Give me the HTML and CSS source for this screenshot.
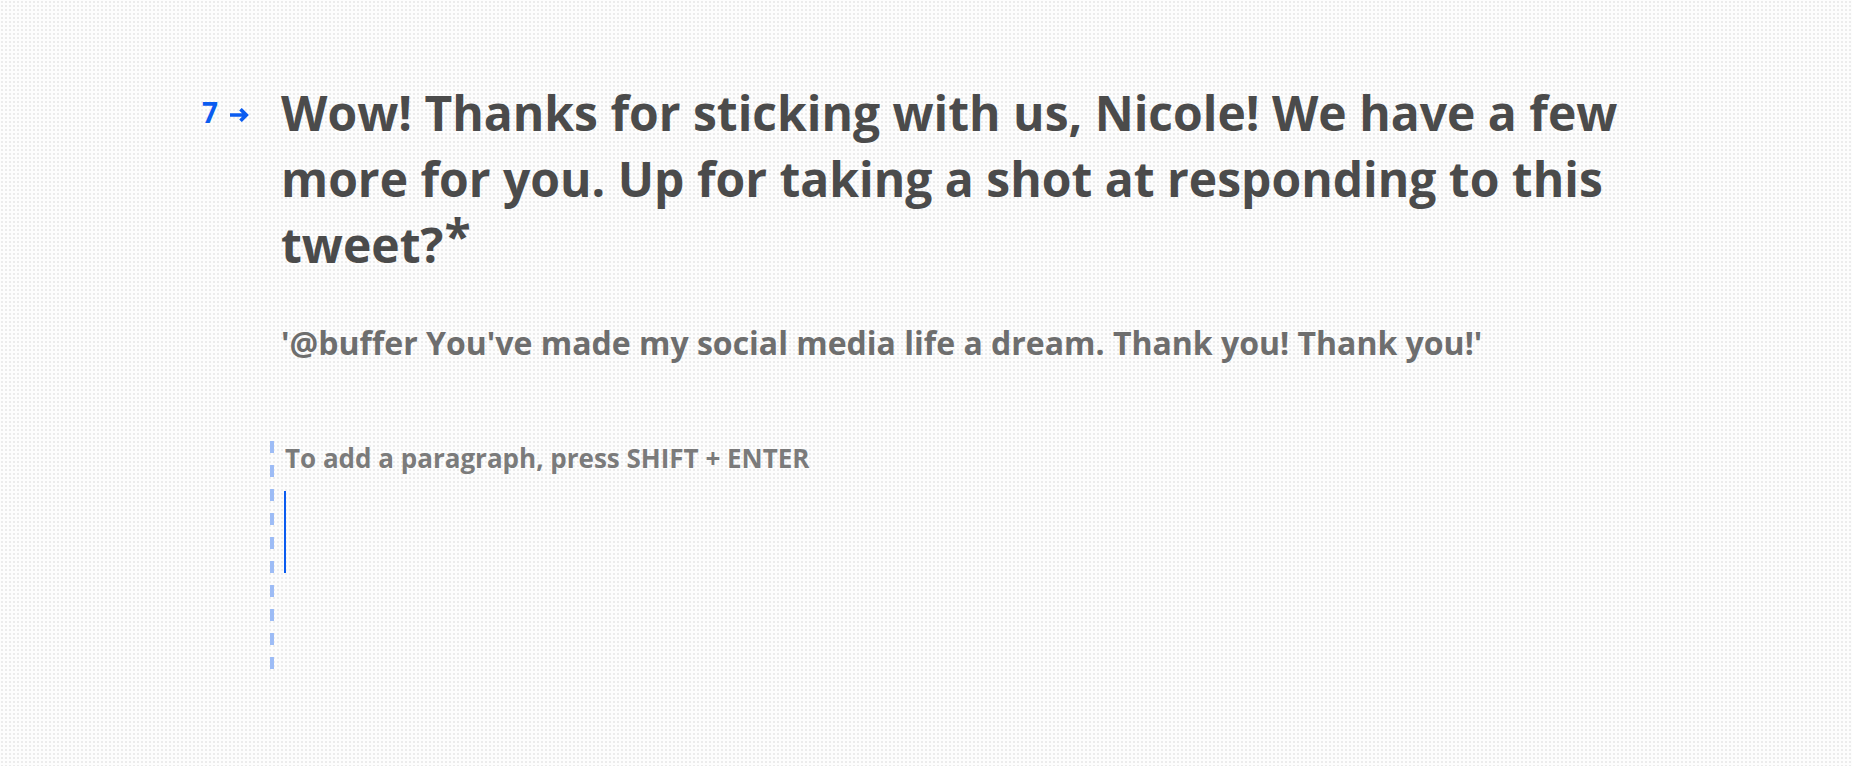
FILE: index.html
```html
<!DOCTYPE html>
<html lang="en">
<head>
  <meta charset="UTF-8" />
  <meta name="viewport" content="width=device-width, initial-scale=1.0"/>
  <title>Question 7</title>
  <link rel="stylesheet" href="styles.css">
</head>
<body>

  <main class="form-step">
    <div class="question">
      <div class="counter">
        <span class="counter-num">7</span>
        <svg class="counter-arrow" width="20" height="14" viewBox="0 0 20 14">
          <path d="M0 7h16M10.5 1.2l5.8 5.8-5.8 5.8" fill="none" stroke="#0b5cf0" stroke-width="3.6"/>
        </svg>
      </div>
      <div class="question-body">
        <h1 class="question-title">Wow! Thanks for sticking with us, Nicole! We have a few more for you. Up for taking a shot at responding to this tweet?<sup class="required">*</sup></h1>
        <p class="question-desc">'@buffer You've made my social media life a dream. Thank you! Thank you!'</p>
      </div>
    </div>

    <div class="answer">
      <div class="answer-hint">To add a paragraph, press SHIFT + ENTER</div>
      <div class="answer-input"><span class="caret"></span></div>
    </div>
  </main>

</body>
</html>
```

FILE: styles.css
```css
html, body {
  margin: 0;
  padding: 0;
  height: 100%;
}

body {
  font-family: "Open Sans", Arial, sans-serif;
  background-color: #fdfdfd;
  background-image: radial-gradient(circle, #ececec 0.8px, transparent 1.2px);
  background-size: 4px 4px;
  overflow: hidden;
}

.form-step {
  padding: 80px 0 0 202px;
  width: 1480px;
}

.question {
  display: flex;
  align-items: flex-start;
}

.counter {
  display: flex;
  align-items: center;
  width: 79px;
  flex-shrink: 0;
  margin-top: 18px;
  color: #0b5cf0;
}

.counter-num {
  font-size: 28px;
  font-weight: 700;
  line-height: 28px;
}

.counter-arrow {
  margin: 6px 0 0 12px;
}

.question-title {
  margin: 0;
  font-size: 48px;
  line-height: 66px;
  font-weight: 700;
  color: #4b4b4b;
}

.required {
  font-size: 1em;
  line-height: 0;
  vertical-align: 9px;
  margin-left: 1px;
}

.question-desc {
  margin: 43px 0 0;
  font-size: 32px;
  line-height: 44px;
  font-weight: 700;
  color: #6e6e6e;
}

.answer {
  margin: 72px 0 0 68px;
  padding-left: 15px;
  height: 233px;
  background-image: linear-gradient(to bottom, #9dbcf6 50%, transparent 50%);
  background-size: 4px 24px;
  background-repeat: repeat-y;
  background-position: 0 4px;
}

.answer-hint {
  font-size: 26px;
  line-height: 32px;
  font-weight: 700;
  color: #7b7b7b;
  padding-top: 5px;
}

.answer-input {
  margin-top: 17px;
}

.caret {
  display: block;
  width: 2px;
  height: 82px;
  background: #0b5cf0;
  margin-left: -1px;
}
```
